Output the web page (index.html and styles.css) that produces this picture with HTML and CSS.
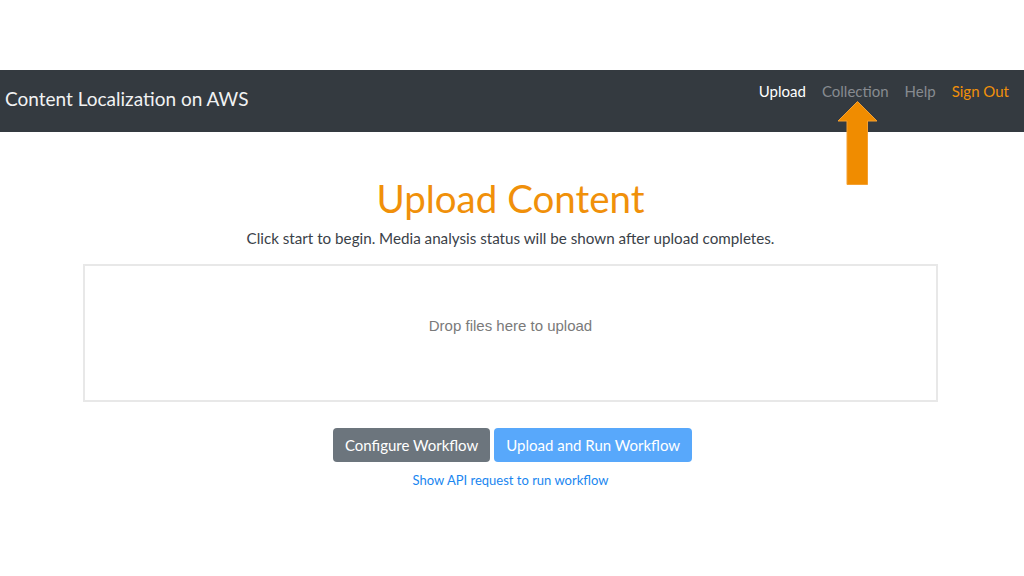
FILE: index.html
```html
<!DOCTYPE html>
<html lang="en">
<head>
    <meta charset="UTF-8">
    <meta name="viewport" content="width=device-width, initial-scale=1.0">
    <title>Content Localization on AWS</title>
    <link rel="stylesheet" href="styles.css">
</head>
<body>
    <div class="top-space"></div>
    <nav class="navbar">
        <a href="#" class="brand">Content Localization on AWS</a>
        <ul class="nav-links">
            <li><a href="#" class="active">Upload</a></li>
            <li class="has-arrow">
                <a href="#">Collection</a>
                <svg class="arrow" width="41" height="84" viewBox="0 0 41 84">
                    <polygon points="20.5,0.5 40,20 30.5,20 30.5,83.5 10,83.5 10,20 1,20" fill="#f08c00" stroke="#f5a030" stroke-width="1"/>
                </svg>
            </li>
            <li><a href="#">Help</a></li>
            <li><a href="#" class="sign-out">Sign Out</a></li>
        </ul>
    </nav>

    <main class="container">
        <h1>Upload Content</h1>
        <p class="intro">Click start to begin. Media analysis status will be shown after upload completes.</p>
        <div class="dropzone">
            <span>Drop files here to upload</span>
        </div>
        <div class="actions">
            <button class="btn btn-secondary">Configure Workflow</button>
            <button class="btn btn-primary" disabled>Upload and Run Workflow</button>
        </div>
        <a href="#" class="api-link">Show API request to run workflow</a>
    </main>
</body>
</html>
```

FILE: styles.css
```css
body {
    margin: 0;
    background-color: #fff;
    font-family: Lato, "Open Sans", sans-serif;
    color: #343a40;
}

.top-space {
    height: 70px;
}

.navbar {
    height: 62px;
    background-color: #343a40;
    display: flex;
    align-items: center;
    justify-content: space-between;
    padding: 0 15px 0 5px;
}

.brand {
    color: #f1f2f3;
    font-size: 19px;
    text-decoration: none;
    margin-top: -6px;
}

.nav-links {
    list-style: none;
    margin: 0;
    padding: 0;
    display: flex;
    gap: 16px;
    margin-top: -22px;
}

.nav-links li {
    position: relative;
}

.nav-links a {
    color: #878b90;
    font-size: 15px;
    text-decoration: none;
}

.nav-links a.active {
    color: #ffffff;
}

.nav-links a.sign-out {
    color: #f0900a;
}

.arrow {
    position: absolute;
    left: 15px;
    top: 20px;
}

.container {
    text-align: center;
    padding: 0 86px 0 83px;
}

h1 {
    color: #f0900a;
    font-size: 38.5px;
    font-weight: 400;
    margin: 41px 0 0;
    line-height: 50px;
}

.intro {
    font-size: 15.2px;
    margin: 6px 0 17px;
    color: #3a4148;
}

.dropzone {
    border: 2px solid #e8e8e8;
    height: 134px;
    display: flex;
    align-items: center;
    justify-content: center;
}

.dropzone span {
    font-family: "Liberation Sans", Arial, sans-serif;
    font-size: 15px;
    color: #7a7a7a;
    margin-top: -16px;
}

.actions {
    display: flex;
    justify-content: center;
    gap: 4px;
    margin-top: 26px;
    padding-left: 4px;
}

.btn {
    font-family: Lato, "Open Sans", sans-serif;
    font-size: 15px;
    color: #fff;
    border: none;
    border-radius: 4px;
    padding: 0 12px;
    height: 34px;
}

.btn-secondary {
    background-color: #6c757d;
}

.btn-primary {
    background-color: #58a8fb;
}

.api-link {
    display: inline-block;
    margin-top: 10px;
    font-size: 13px;
    color: #1a86f0;
    text-decoration: none;
}
```
